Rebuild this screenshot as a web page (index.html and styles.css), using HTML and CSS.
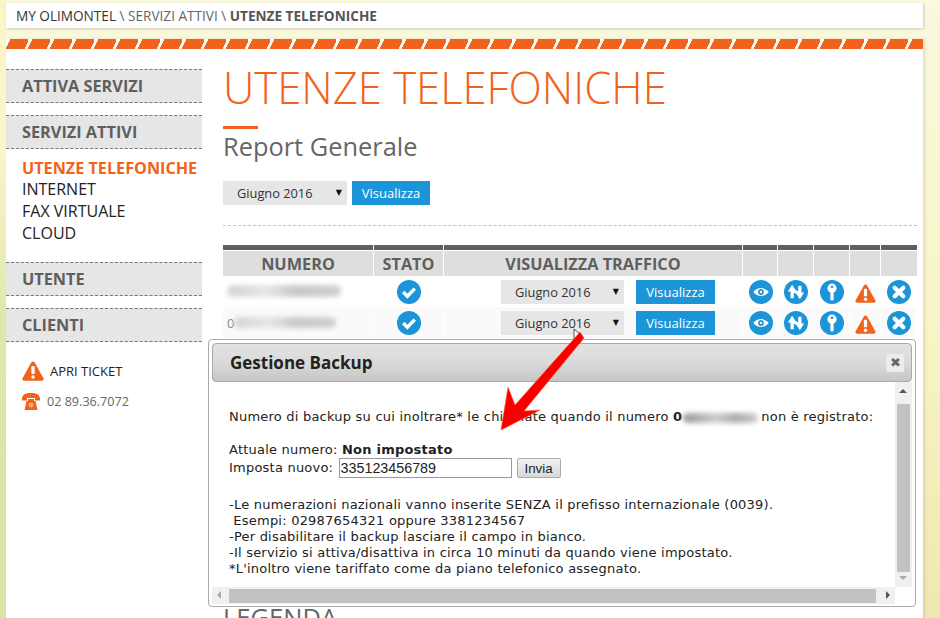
FILE: index.html
```html
<!DOCTYPE html>
<html lang="it">
<head>
    <meta charset="UTF-8">
    <meta name="viewport" content="width=device-width, initial-scale=1.0">
    <title>Utenze Telefoniche</title>
    <link rel="stylesheet" href="styles.css">
</head>
<body>

    <svg class="defs" width="0" height="0">
        <symbol id="i-check" viewBox="0 0 25 25">
            <circle cx="12.5" cy="12.5" r="12.5" fill="#1b95d8"/>
            <path d="M6.5 12.5l4.3 4.5 7.7-8" fill="none" stroke="#fff" stroke-width="3.6"/>
        </symbol>
        <symbol id="i-eye" viewBox="0 0 25 25">
            <circle cx="12.5" cy="12.5" r="12.5" fill="#1b95d8"/>
            <path d="M4.5 12.5c4-5.4 12-5.4 16 0-4 5.4-12 5.4-16 0z" fill="#fff"/>
            <circle cx="12.5" cy="12.5" r="3" fill="#1b95d8"/>
            <circle cx="12.5" cy="12.5" r="1.2" fill="#fff"/>
        </symbol>
        <symbol id="i-swap" viewBox="0 0 25 25">
            <circle cx="12.5" cy="12.5" r="12.5" fill="#1b95d8"/>
            <path d="M8.5 19v-8.500l8 4V6" fill="none" stroke="#fff" stroke-width="3.4"/>
            <path d="M4 12l4.500-7 4.500 7zM12 13l4.500 7 4.500-7z" fill="#fff"/>
        </symbol>
        <symbol id="i-key" viewBox="0 0 25 25">
            <circle cx="12.5" cy="12.5" r="12.5" fill="#1b95d8"/>
            <circle cx="12.5" cy="8.5" r="4.8" fill="#fff"/>
            <path d="M10.8 11h3.400v9l-1.700 1.800-1.700-1.800z" fill="#fff"/>
            <circle cx="12.5" cy="7" r="1.300" fill="#1b95d8"/>
        </symbol>
        <symbol id="i-warn" viewBox="0 0 22 20">
            <path d="M11 .5c1 0 1.500.6 2 1.500l8.300 15c.8 1.500.1 2.700-1.500 2.700H2.200C.6 19.700-.1 18.500.7 17L9 2c.5-.9 1-1.500 2-1.500z" fill="#f2621a"/>
            <rect x="9.300" y="5" width="3.400" height="8" rx="1" fill="#fff"/>
            <circle cx="11" cy="16" r="1.800" fill="#fff"/>
        </symbol>
        <symbol id="i-close" viewBox="0 0 25 25">
            <circle cx="12.5" cy="12.5" r="12.5" fill="#1b95d8"/>
            <path d="M8 8l9 9M17 8l-9 9" stroke="#fff" stroke-width="4.400" stroke-linecap="round"/>
        </symbol>
    </svg>

    <div class="breadcrumb">
        <span class="crumb-home">MY OLIMONTEL</span> \ SERVIZI ATTIVI \ <strong>UTENZE TELEFONICHE</strong>
    </div>

    <div class="page">
        <div class="stripes"></div>
        <div class="columns">
            <div class="sidebar">
                <div class="side-head">ATTIVA SERVIZI</div>
                <div class="side-head">SERVIZI ATTIVI</div>
                <ul class="side-list">
                    <li class="current">UTENZE TELEFONICHE</li>
                    <li>INTERNET</li>
                    <li>FAX VIRTUALE</li>
                    <li>CLOUD</li>
                </ul>
                <div class="side-head">UTENTE</div>
                <div class="side-head">CLIENTI</div>
                <div class="ticket">
                    <svg class="ticket-icon"><use href="#i-warn"/></svg>
                    APRI TICKET
                </div>
                <div class="phone">
                    <svg class="phone-icon" viewBox="0 0 18 17">
                        <path d="M0 6C0 1.500 4 0 9 0s9 1.500 9 6v1.500h-5V5H5v2.500H0z" fill="#f2621a"/>
                        <path d="M2.500 17l2-9H6V6h6v2h1.500l2 9z" fill="#f2621a"/>
                        <circle cx="9" cy="12" r="2.400" fill="#fff" opacity=".45"/>
                    </svg>
                    02 89.36.7072
                </div>
            </div>

            <div class="content">
                <h1>UTENZE TELEFONICHE</h1>
                <h2>Report Generale</h2>
                <div class="filter">
                    <div class="select wide">Giugno 2016</div>
                    <button class="btn">Visualizza</button>
                </div>

                <table class="report">
                    <colgroup>
                        <col class="c-num"><col class="c-stato"><col class="c-traffic">
                        <col class="c-a"><col class="c-b"><col class="c-b"><col class="c-c"><col class="c-d">
                    </colgroup>
                    <tr>
                        <th>NUMERO</th>
                        <th>STATO</th>
                        <th>VISUALIZZA TRAFFICO</th>
                        <th></th><th></th><th></th><th></th><th></th>
                    </tr>
                    <tr>
                        <td class="num"><span class="smudge s1"></span></td>
                        <td><svg class="ico"><use href="#i-check"/></svg></td>
                        <td class="traffic"><div class="select">Giugno 2016</div><button class="btn">Visualizza</button></td>
                        <td><svg class="ico"><use href="#i-eye"/></svg></td>
                        <td><svg class="ico"><use href="#i-swap"/></svg></td>
                        <td><svg class="ico"><use href="#i-key"/></svg></td>
                        <td><svg class="ico-warn"><use href="#i-warn"/></svg></td>
                        <td><svg class="ico"><use href="#i-close"/></svg></td>
                    </tr>
                    <tr class="even">
                        <td class="num">0<span class="smudge s2"></span></td>
                        <td><svg class="ico"><use href="#i-check"/></svg></td>
                        <td class="traffic"><div class="select">Giugno 2016</div><button class="btn">Visualizza</button></td>
                        <td><svg class="ico"><use href="#i-eye"/></svg></td>
                        <td><svg class="ico"><use href="#i-swap"/></svg></td>
                        <td><svg class="ico"><use href="#i-key"/></svg></td>
                        <td><svg class="ico-warn"><use href="#i-warn"/></svg></td>
                        <td><svg class="ico"><use href="#i-close"/></svg></td>
                    </tr>
                </table>

                <h3 class="legenda">LEGENDA</h3>
            </div>
        </div>
    </div>

    <div class="dialog">
        <div class="dialog-title">
            <span>Gestione Backup</span>
            <button class="dialog-close">&#10006;</button>
        </div>
        <div class="dialog-body">
            <div class="dialog-text">
                <p class="first">Numero di backup su cui inoltrare* le chiamate quando il numero <b>0</b><span class="smudge s3"></span>non è registrato:</p>
                <p class="current-num">Attuale numero: <b>Non impostato</b></p>
                <p class="new-num">Imposta nuovo: <input class="num-input" type="text" value="335123456789"> <button class="send">Invia</button></p>
                <p class="notes">-Le numerazioni nazionali vanno inserite SENZA il prefisso internazionale (0039).<br>
                &nbsp;Esempi: 02987654321 oppure 3381234567<br>
                -Per disabilitare il backup lasciare il campo in bianco.<br>
                -Il servizio si attiva/disattiva in circa 10 minuti da quando viene impostato.<br>
                *L'inoltro viene tariffato come da piano telefonico assegnato.</p>
            </div>
            <div class="vbar">
                <span class="arrow-up"></span>
                <span class="vthumb"></span>
                <span class="arrow-down"></span>
            </div>
            <div class="hbar">
                <span class="arrow-left"></span>
                <span class="hthumb"></span>
                <span class="arrow-right"></span>
            </div>
            <div class="corner"></div>
        </div>
    </div>

    <!-- freccia rossa e cursore sopra lo screenshot -->
    <svg class="overlay" width="940" height="618" viewBox="0 0 940 618">
        <path d="M574 329v12l3-3 2 5 2-1-2-5h4z" fill="#fff" stroke="#222" stroke-width=".8"/>
        <polygon points="580,332 584,338 524,411 540,410 501,430 508,387 515,405" fill="#f80000" stroke="#ff5a2a" stroke-width=".6"/>
    </svg>

</body>
</html>
```

FILE: styles.css
```css
html, body {
    margin: 0;
    height: 618px;
    overflow: hidden;
}
body {
    position: relative;
    font-family: "Open Sans", "Noto Sans", sans-serif;
    background:
        linear-gradient(to bottom, #fbf5c8 0, #fbf5c8 150px, #dfe7ac 320px, #d9e4a5 100%) left top / 6px 100% no-repeat,
        linear-gradient(to bottom, #faf8de 0, #f9f5c8 50%, #efe8b0 100%);
    padding: 3px 17px 0 6px;
    box-sizing: border-box;
}
.defs {
    position: absolute;
}
.breadcrumb {
    background: white;
    height: 25px;
    line-height: 25px;
    padding-left: 10px;
    font-size: 13.6px;
    color: #666;
    box-shadow: 1px 1px 3px rgba(0, 0, 0, 0.2);
}
.breadcrumb strong {
    color: #555;
}
.crumb-home {
    color: #333;
}
.page {
    margin-top: 11px;
    height: 579px;
    background: white;
    box-shadow: 2px 0 3px rgba(0, 0, 0, 0.1);
}
.stripes {
    height: 10px;
    background-image: linear-gradient(115deg, transparent 0, transparent 16%, #f2621a 16%, #f2621a 88%, transparent 88%);
    background-size: 22px 10px;
    background-repeat: repeat-x;
}
.columns {
    display: flex;
}
.sidebar {
    width: 196px;
    padding-top: 8px;
    flex-shrink: 0;
}
.side-head {
    height: 32px;
    line-height: 33px;
    padding-left: 16px;
    margin-top: 12px;
    background: #e6e6e6;
    border-top: 1px dashed #777;
    border-bottom: 1px dashed #777;
    font-size: 16.3px;
    font-weight: 700;
    color: #5f5f5f;
}
.side-list {
    list-style: none;
    margin: 10px 0 18px;
    padding: 0 0 0 16px;
    font-size: 16px;
    line-height: 22px;
    color: #222;
}
.current {
    color: #f2621a;
    font-size: 16.2px;
    font-weight: 700;
    line-height: 19px;
    white-space: nowrap;
}
.ticket {
    display: flex;
    align-items: center;
    margin: 19px 0 0 16px;
    font-size: 13px;
    color: #222;
}
.ticket-icon {
    width: 22px;
    height: 20px;
    margin-right: 6px;
}
.phone {
    display: flex;
    align-items: center;
    margin: 12px 0 0 16px;
    font-size: 12.6px;
    color: #666;
}
.phone-icon {
    width: 18px;
    height: 17px;
    margin-right: 7px;
}
.content {
    margin-left: 21px;
    width: 694px;
}
h1 {
    margin: 13px 0 0;
    font-size: 43.6px;
    line-height: 50px;
    font-weight: 300;
    color: #f2621a;
    white-space: nowrap;
}
h2 {
    margin: 14px 0 0;
    font-size: 25.4px;
    line-height: 34px;
    font-weight: 400;
    color: #666;
}
h2::before {
    content: "";
    display: block;
    width: 35px;
    height: 3px;
    background: #f2621a;
}
.filter {
    display: flex;
    gap: 5px;
    margin-top: 18px;
    padding-bottom: 20px;
    border-bottom: 1px dashed #9fd0dc;
}
.select {
    position: relative;
    box-sizing: border-box;
    width: 123px;
    height: 24px;
    line-height: 24px;
    padding-left: 14px;
    background: #e6e6e6;
    font-size: 12.8px;
    color: #333;
}
.select.wide {
    width: 124px;
}
.select::after {
    content: "\25BC";
    position: absolute;
    right: 5px;
    top: 0;
    font-family: "DejaVu Sans", sans-serif;
    font-size: 8px;
    color: #111;
}
.btn {
    width: 78px;
    height: 24px;
    padding: 0;
    border: none;
    background-color: #1b95d8;
    color: white;
    font-family: inherit;
    font-size: 13px;
    cursor: pointer;
}
.report {
    margin-top: 24px;
    border-collapse: separate;
    border-spacing: 0;
    table-layout: fixed;
    width: 694px;
}
.c-num { width: 151px; }
.c-stato { width: 70px; }
.c-traffic { width: 299px; }
.c-a { width: 35px; }
.c-b { width: 36px; }
.c-c { width: 31px; }
.c-d { width: 36px; }
.report th {
    height: 25px;
    padding: 0;
    background: #dedede;
    border-top: 1px solid white;
    border-right: 1px solid white;
    font-size: 16.3px;
    font-weight: 700;
    color: #5f5f5f;
    position: relative;
}
.report th::before {
    content: "";
    position: absolute;
    left: 0;
    right: 0;
    top: -6px;
    height: 5px;
    background: #5f5f5f;
}
.report th:last-child {
    border-right: none;
}
.report td {
    height: 31px;
    padding: 0;
    text-align: center;
    vertical-align: middle;
}
.report tr.even td {
    background: #fafafa;
    box-shadow: inset -1px 0 0 white;
}
.report td.num {
    text-align: left;
    padding-left: 4px;
    font-size: 13px;
    color: #888;
}
.report td.traffic {
    text-align: left;
    padding-left: 57px;
}
.traffic .select,
.traffic .btn {
    display: inline-block;
    vertical-align: middle;
}
.traffic .btn {
    width: 79px;
    margin-left: 12px;
}
.ico {
    display: inline-block;
    vertical-align: middle;
    width: 24px;
    height: 24px;
}
.ico-warn {
    display: inline-block;
    vertical-align: middle;
    width: 21px;
    height: 19px;
}
.smudge {
    display: inline-block;
    background: linear-gradient(to right, #d4d4d4, #e6e6e6 35%, #c8c8c8 60%, #d0d0d0);
    border-radius: 6px;
    filter: blur(2.5px);
}
.s1 {
    width: 114px;
    height: 12px;
}
.s2 {
    width: 102px;
    height: 11px;
}
.s3 {
    width: 75px;
    height: 10px;
    margin: 0 3px 0 1px;
    vertical-align: middle;
    background: linear-gradient(to right, #999, #ccc 45%, #aaa 70%, #ccc);
}
.legenda {
    margin: 264px 0 0;
    font-size: 25.5px;
    line-height: 30px;
    font-weight: 400;
    color: #666;
}

/* finestra di dialogo */
.dialog {
    position: absolute;
    left: 208px;
    top: 339px;
    width: 708px;
    height: 268px;
    box-sizing: border-box;
    padding: 3px;
    background: white;
    border: 1px solid #aaa;
    border-radius: 4px;
}
.dialog-title {
    display: flex;
    align-items: center;
    justify-content: space-between;
    box-sizing: border-box;
    height: 39px;
    padding: 0 7px 0 17px;
    background: linear-gradient(to bottom, #e2e2e2, #dadada 50%, #c6c6c6);
    border: 1px solid #aaa;
    border-radius: 4px;
    font-size: 17px;
    font-weight: 700;
    color: #222;
}
.dialog-close {
    width: 18px;
    height: 18px;
    padding: 0;
    border: none;
    border-radius: 2px;
    background: #ececec;
    color: #666;
    font-size: 13px;
    line-height: 18px;
}
.dialog-body {
    display: grid;
    grid-template-columns: 683px 17px;
    grid-template-rows: 205px 17px;
    font-family: "DejaVu Sans", sans-serif;
    font-size: 13px;
    letter-spacing: 0.22px;
    color: #222;
}
.dialog-text {
    padding: 27px 0 0 17px;
    white-space: nowrap;
    overflow: hidden;
}
.dialog-text p {
    margin: 0;
}
.current-num {
    margin-top: 18px !important;
    line-height: 16px;
}
.new-num {
    display: flex;
    align-items: center;
    line-height: 20px;
    white-space: pre;
}
.num-input {
    box-sizing: border-box;
    width: 173px;
    height: 20px;
    margin: 0 0 0 1px;
    padding: 0 1px;
    border: 1px solid #999;
    font-family: "Liberation Sans", sans-serif;
    font-size: 14.3px;
    color: #222;
}
.send {
    box-sizing: border-box;
    width: 44px;
    height: 20px;
    margin-left: 5px;
    padding: 0;
    border: 1px solid #aaa;
    border-radius: 2px;
    background: linear-gradient(to bottom, #f2f2f2, #d8d8d8);
    font-family: "Liberation Sans", sans-serif;
    font-size: 13.3px;
    color: #222;
}
.notes {
    margin-top: 19px !important;
    line-height: 16px;
}
.vbar {
    position: relative;
    background: #f0f0f0;
}
.vthumb {
    position: absolute;
    left: 2px;
    right: 2px;
    top: 22px;
    height: 168px;
    background: #c2c2c2;
}
.hbar {
    position: relative;
    background: #f0f0f0;
}
.hthumb {
    position: absolute;
    left: 17px;
    width: 647px;
    top: 2px;
    bottom: 1px;
    background: #c2c2c2;
}
.corner {
    background: white;
}
.arrow-up,
.arrow-down,
.arrow-left,
.arrow-right {
    position: absolute;
    width: 0;
    height: 0;
    border: 4px solid transparent;
}
.arrow-up {
    left: 4px;
    top: 3px;
    border-bottom-color: #555;
}
.arrow-down {
    left: 4px;
    bottom: 3px;
    border-top-color: #aaa;
}
.arrow-left {
    left: 1px;
    top: 4px;
    border-right-color: #aaa;
}
.arrow-right {
    right: 1px;
    top: 4px;
    border-left-color: #555;
}
.overlay {
    position: absolute;
    left: 0;
    top: 0;
    pointer-events: none;
}
```
